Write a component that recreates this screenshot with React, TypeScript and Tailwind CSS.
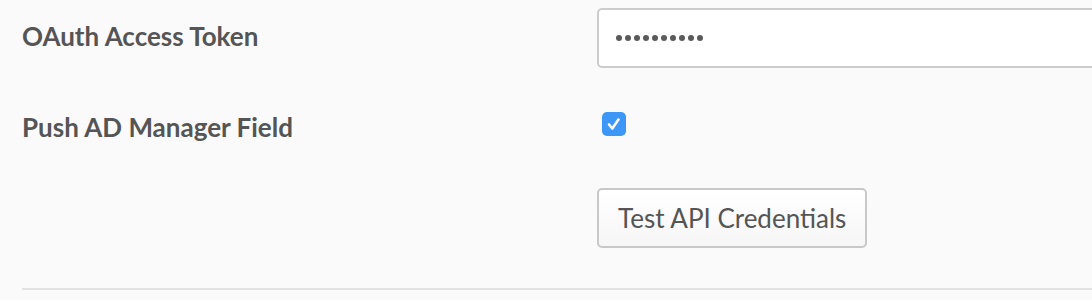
export default function App() {
  const dots = Array.from({ length: 10 });
  return (
    <div className="h-[300px] w-[1092px] overflow-hidden bg-[#fafafa] pl-[22px] pt-[8px] font-['Lato','Open_Sans',sans-serif] text-[#555555]">
      {/* token row */}
      <div className="flex h-[60px] items-center">
        <label className="w-[575px] shrink-0 pb-[3px] text-[26px] font-bold">OAuth Access Token</label>
        <div className="flex h-[60px] w-[540px] shrink-0 items-center gap-[3px] rounded-[5px] border-2 border-[#cccccc] bg-white pl-[17px]">
          {dots.map((_, i) => (
            <span key={i} className="h-[6px] w-[6px] rounded-full bg-[#5a5a5a]" />
          ))}
        </div>
      </div>

      {/* checkbox row */}
      <div className="mt-[44px] flex h-[24px] items-center">
        <label className="w-[575px] shrink-0 pt-[6px] text-[26px] font-bold">Push AD Manager Field</label>
        <div className="ml-[5px] flex h-[24px] w-[24px] items-center justify-center rounded-[5px] bg-[#3d97f7]">
          <svg width="18" height="18" viewBox="0 0 18 18" fill="none">
            <path d="M4 9.5 L7.3 13.5 L13.5 4.5" stroke="white" strokeWidth="2.6" strokeLinecap="round" strokeLinejoin="round" />
          </svg>
        </div>
      </div>

      {/* test button */}
      <div className="mt-[52px] flex">
        <div className="w-[575px] shrink-0" />
        <button className="h-[60px] rounded-[5px] border-2 border-[#c8c8c8] bg-gradient-to-b from-white to-[#f6f6f6] px-[19px] text-[26px] text-[#555555]">
          Test API Credentials
        </button>
      </div>

      <div className="mt-[40px] h-[2px] bg-[#e2e2e2]" />
    </div>
  );
}
